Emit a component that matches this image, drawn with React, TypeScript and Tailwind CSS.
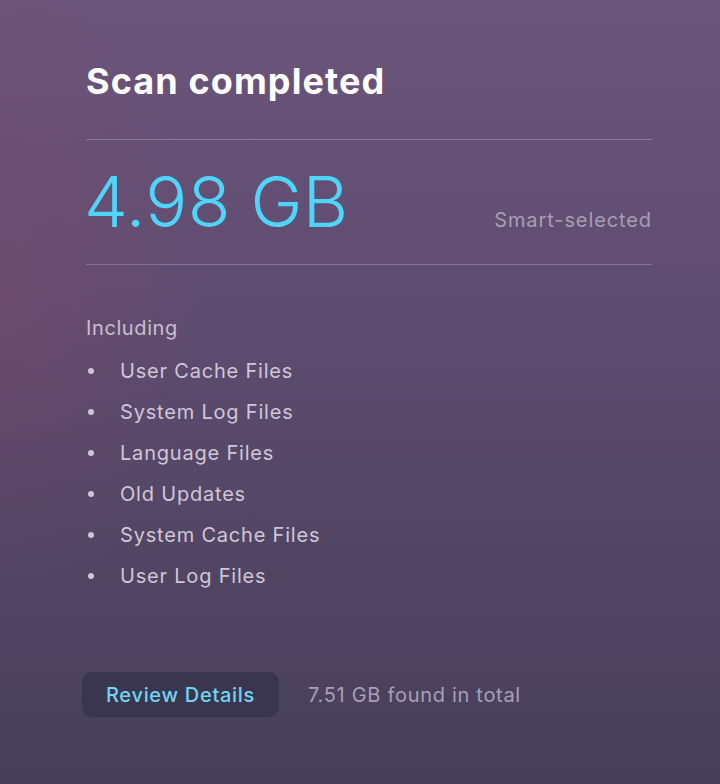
import React from 'react';

const items = [
  'User Cache Files',
  'System Log Files',
  'Language Files',
  'Old Updates',
  'System Cache Files',
  'User Log Files',
];

export default function App() {
  return (
    <div
      className="min-h-screen w-full bg-[radial-gradient(ellipse_200px_320px_at_0px_300px,rgba(140,70,100,0.25),transparent),linear-gradient(180deg,#6c557a_0%,#5e4c70_40%,#463f59_100%)] font-['Inter','Noto_Sans',sans-serif]"
    >
      <div className="ml-[86px] w-[566px] pt-[59px]">
        {/* header */}
        <h1 className="text-[36px] leading-[44px] font-bold text-white tracking-[1.1px]">Scan completed</h1>

        <div className="mt-[36px] h-px bg-[#8c7d9c]" />

        {/* total selected */}
        <div className="mt-[27px] flex items-baseline justify-between">
          <span className="-ml-[2px] text-[70px] leading-[70px] font-light text-[#4fd4fa] tracking-[0.2px]">4.98 GB</span>
          <span className="text-[20px] text-[#a99db5] tracking-[0.9px]">Smart-selected</span>
        </div>

        <div className="mt-[27px] h-px bg-[#807294]" />

        {/* categories */}
        <div className="mt-[49px] text-[20px] leading-[28px] text-[#c9bed2] tracking-[0.6px]">Including</div>
        <ul className="mt-[8px]">
          {items.map((item) => (
            <li key={item} className="flex items-center h-[41px] text-[20px] text-[#d0c6d8] tracking-[0.8px]">
              <span className="w-[6px] h-[6px] rounded-full bg-[#cfc5d7] ml-[2px] mr-[26px]" />
              {item}
            </li>
          ))}
        </ul>

        {/* footer */}
        <div className="mt-[76px] flex items-center">
          <button className="-ml-[4px] h-[45px] w-[197px] rounded-[10px] bg-[#3a3650] text-[20px] font-medium text-[#72d4f3] tracking-[0.7px]">
            Review Details
          </button>
          <span className="ml-[29px] text-[20px] text-[#a89fb6] tracking-[0.7px]">7.51 GB found in total</span>
        </div>
      </div>
    </div>
  );
}
